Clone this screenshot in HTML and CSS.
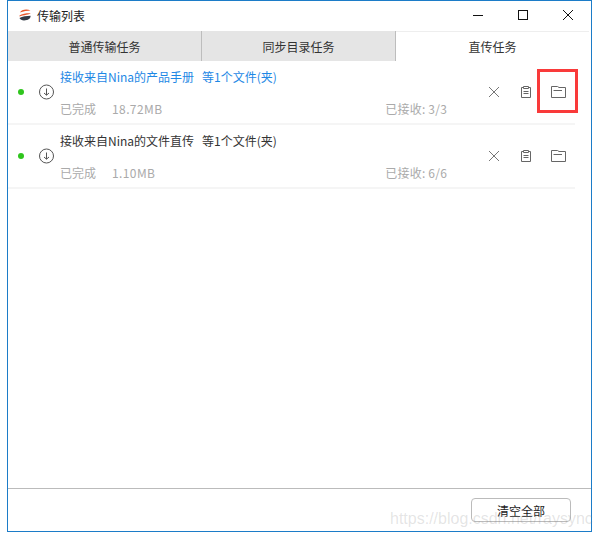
FILE: index.html
```html
<!DOCTYPE html>
<html lang="zh-CN">

<head>
    <meta charset="UTF-8">
    <title>传输列表</title>
    <link rel="stylesheet" href="styles.css">
</head>

<body>
    <div class="window">
        <div class="titlebar">
            <svg class="logo" width="14" height="14" viewBox="0 0 14 14">
                <path d="M2 4.5C3 1.5 9 0.5 12.5 2.5C10 2.8 5 3.2 2 4.5Z" fill="#e8562a"/>
                <path d="M1.5 7.5C4 5.5 9.5 5 12.5 5.2C12.5 6.5 5 7 1.5 8.5Z" fill="#e8562a"/>
                <path d="M1.5 10C4 8.5 9 8 12.5 7.8C13 10.5 10 12.5 6 12.5C4 12.5 2 11.5 1.5 10Z" fill="#333a45"/>
            </svg>
            <span class="title">传输列表</span>
            <div class="window-buttons">
                <svg width="12" height="12" viewBox="0 0 12 12"><path d="M1 6.5H11" stroke="#111" fill="none"/></svg>
                <svg width="12" height="12" viewBox="0 0 12 12"><rect x="1.5" y="1.5" width="9" height="9" stroke="#111" fill="none"/></svg>
                <svg width="12" height="12" viewBox="0 0 12 12"><path d="M1 1L11 11M11 1L1 11" stroke="#111" fill="none"/></svg>
            </div>
        </div>
        <div class="tabs">
            <div class="tab">普通传输任务</div>
            <div class="tab">同步目录任务</div>
            <div class="tab active">直传任务</div>
        </div>
        <div class="list">
            <div class="row">
                <span class="dot"></span>
                <svg class="down" width="16" height="16" viewBox="0 0 16 16">
                    <circle cx="7.5" cy="8" r="7" stroke="#555" fill="none"/>
                    <path d="M7.5 4.5V11M5 9L7.5 11.2L10 9" stroke="#555" fill="none"/>
                </svg>
                <div class="info">
                    <div class="name link"><span>接收来自Nina的产品手册</span><span>等1个文件(夹)</span></div>
                    <div class="meta"><span class="state">已完成</span><span class="size">18.72MB</span><span class="recv">已接收: 3/3</span></div>
                </div>
                <div class="actions">
                    <svg width="14" height="14" viewBox="0 0 14 14"><path d="M2 2L12 12M12 2L2 12" stroke="#777" fill="none"/></svg>
                    <svg width="14" height="14" viewBox="0 0 14 14"><path d="M4.5 2.5H2.5V12.5H11.5V2.5H9.5M4.5 1.5H9.5V3.5H4.5ZM4.5 6.5H9.5M4.5 8.5H9.5" stroke="#666" fill="none"/></svg>
                    <svg width="15" height="14" viewBox="0 0 15 14"><path d="M0.5 12.5V1.5H6.5L8 2.5H14.5V12.5ZM2.5 5.5H11" stroke="#666" fill="none"/></svg>
                </div>
                <div class="highlight"></div>
            </div>
            <div class="row">
                <span class="dot"></span>
                <svg class="down" width="16" height="16" viewBox="0 0 16 16">
                    <circle cx="7.5" cy="8" r="7" stroke="#555" fill="none"/>
                    <path d="M7.5 4.5V11M5 9L7.5 11.2L10 9" stroke="#555" fill="none"/>
                </svg>
                <div class="info">
                    <div class="name"><span>接收来自Nina的文件直传</span><span>等1个文件(夹)</span></div>
                    <div class="meta"><span class="state">已完成</span><span class="size">1.10MB</span><span class="recv">已接收: 6/6</span></div>
                </div>
                <div class="actions">
                    <svg width="14" height="14" viewBox="0 0 14 14"><path d="M2 2L12 12M12 2L2 12" stroke="#777" fill="none"/></svg>
                    <svg width="14" height="14" viewBox="0 0 14 14"><path d="M4.5 2.5H2.5V12.5H11.5V2.5H9.5M4.5 1.5H9.5V3.5H4.5ZM4.5 6.5H9.5M4.5 8.5H9.5" stroke="#666" fill="none"/></svg>
                    <svg width="15" height="14" viewBox="0 0 15 14"><path d="M0.5 12.5V1.5H6.5L8 2.5H14.5V12.5ZM2.5 5.5H11" stroke="#666" fill="none"/></svg>
                </div>
            </div>
        </div>
        <div class="footer">
            <button class="clear">清空全部</button>
        </div>
    </div>
    <div class="watermark">https://blog.csdn.net/raysync</div>
</body>

</html>
```

FILE: styles.css
```css
* {
    box-sizing: border-box;
}

body {
    margin: 0;
    background-color: #fff;
    font-family: "Noto Sans CJK SC", "Noto Sans", sans-serif;
    font-size: 12px;
    color: #333;
}

.window {
    display: flex;
    flex-direction: column;
    width: 585px;
    height: 532px;
    margin-left: 7px;
    border: 1px solid #1c7cc8;
}

.titlebar {
    display: flex;
    align-items: center;
    height: 30px;
    padding-left: 10px;
    padding-bottom: 2px;
}

.logo {
    margin-right: 5px;
}

.title {
    color: #222;
}

.window-buttons {
    display: flex;
    gap: 33px;
    margin-left: auto;
    margin-right: 17px;
}

.tabs {
    display: flex;
    height: 30px;
    padding-right: 2px;
}

.tab {
    flex: 1;
    display: flex;
    align-items: center;
    justify-content: center;
    background-color: #e5e5e5;
    border-right: 1px solid #bdbdbd;
    color: #333;
}

.tab.active {
    background-color: #fff;
    border-right: none;
    border-top: 1px solid #eee;
}

.list {
    flex: 1;
}

.row {
    position: relative;
    display: flex;
    align-items: center;
    height: 64px;
    width: 567px;
    padding-left: 10px;
    border-bottom: 2px solid #f5f5f5;
}

.dot {
    width: 6px;
    height: 6px;
    border-radius: 50%;
    background-color: #2fc51d;
}

.down {
    margin-left: 15px;
}

.info {
    display: flex;
    flex-direction: column;
    gap: 14px;
    width: 400px;
    margin-left: 5px;
    padding-top: 4px;
}

.name {
    display: flex;
    gap: 8px;
    line-height: 18px;
    margin-top: -2px;
}

.link {
    color: #1e88e5;
}

.meta {
    display: flex;
    line-height: 18px;
    color: #aaa;
}

.size {
    margin-left: 16px;
    letter-spacing: 0.4px;
}

.recv {
    margin-left: auto;
    margin-right: 13px;
    letter-spacing: 0.2px;
}

.actions {
    display: flex;
    align-items: center;
    gap: 18px;
    margin-left: 27px;
}

.highlight {
    position: absolute;
    left: 529px;
    top: 8px;
    width: 41px;
    height: 44px;
    border: 3px solid #f93a3a;
}

.footer {
    display: flex;
    justify-content: flex-end;
    height: 43px;
    padding: 9px 20px 0 0;
    border-top: 1px solid #bbb;
}

.clear {
    width: 100px;
    height: 24px;
    padding: 0;
    border: 1px solid #bbb;
    border-radius: 4px;
    background-color: #fff;
    font-family: inherit;
    font-size: 12px;
    color: #222;
}

.watermark {
    position: absolute;
    left: 390px;
    top: 510px;
    font-family: "Liberation Sans", sans-serif;
    font-size: 16px;
    color: rgba(120, 120, 120, 0.2);
}
```
